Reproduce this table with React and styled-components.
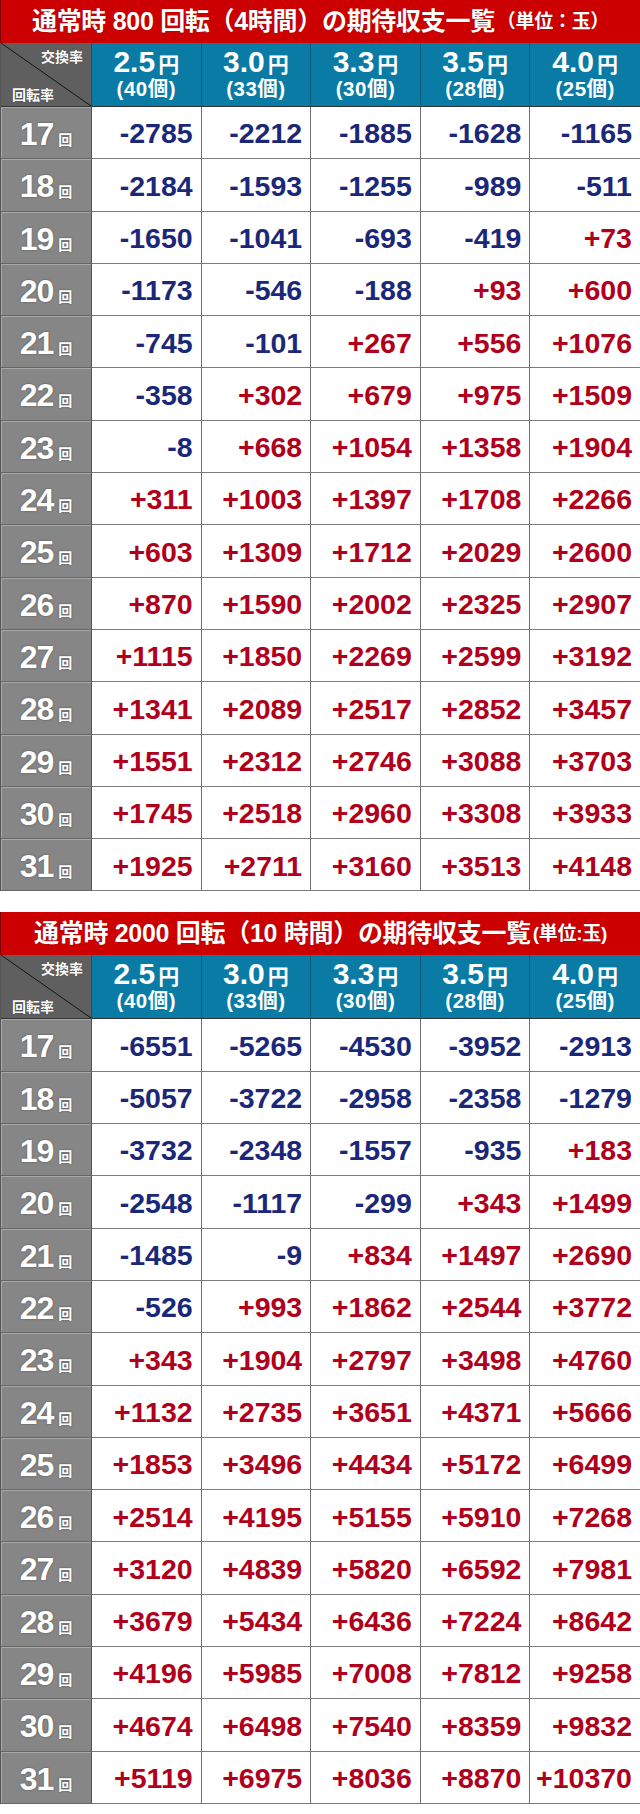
import React from 'react'
import styled, { createGlobalStyle } from 'styled-components'

const rates = [
  { yen: '2.5', count: '40' },
  { yen: '3.0', count: '33' },
  { yen: '3.3', count: '30' },
  { yen: '3.5', count: '28' },
  { yen: '4.0', count: '25' },
]

const spins = [17, 18, 19, 20, 21, 22, 23, 24, 25, 26, 27, 28, 29, 30, 31]

const tables = [
  {
    title: '通常時 800 回転（4時間）の期待収支一覧',
    unit: '（単位：玉）',
    rows: [
      ['-2785', '-2212', '-1885', '-1628', '-1165'],
      ['-2184', '-1593', '-1255', '-989', '-511'],
      ['-1650', '-1041', '-693', '-419', '+73'],
      ['-1173', '-546', '-188', '+93', '+600'],
      ['-745', '-101', '+267', '+556', '+1076'],
      ['-358', '+302', '+679', '+975', '+1509'],
      ['-8', '+668', '+1054', '+1358', '+1904'],
      ['+311', '+1003', '+1397', '+1708', '+2266'],
      ['+603', '+1309', '+1712', '+2029', '+2600'],
      ['+870', '+1590', '+2002', '+2325', '+2907'],
      ['+1115', '+1850', '+2269', '+2599', '+3192'],
      ['+1341', '+2089', '+2517', '+2852', '+3457'],
      ['+1551', '+2312', '+2746', '+3088', '+3703'],
      ['+1745', '+2518', '+2960', '+3308', '+3933'],
      ['+1925', '+2711', '+3160', '+3513', '+4148'],
    ],
  },
  {
    title: '通常時 2000 回転（10 時間）の期待収支一覧',
    unit: '(単位:玉)',
    rows: [
      ['-6551', '-5265', '-4530', '-3952', '-2913'],
      ['-5057', '-3722', '-2958', '-2358', '-1279'],
      ['-3732', '-2348', '-1557', '-935', '+183'],
      ['-2548', '-1117', '-299', '+343', '+1499'],
      ['-1485', '-9', '+834', '+1497', '+2690'],
      ['-526', '+993', '+1862', '+2544', '+3772'],
      ['+343', '+1904', '+2797', '+3498', '+4760'],
      ['+1132', '+2735', '+3651', '+4371', '+5666'],
      ['+1853', '+3496', '+4434', '+5172', '+6499'],
      ['+2514', '+4195', '+5155', '+5910', '+7268'],
      ['+3120', '+4839', '+5820', '+6592', '+7981'],
      ['+3679', '+5434', '+6436', '+7224', '+8642'],
      ['+4196', '+5985', '+7008', '+7812', '+9258'],
      ['+4674', '+6498', '+7540', '+8359', '+9832'],
      ['+5119', '+6975', '+8036', '+8870', '+10370'],
    ],
  },
]

const GlobalStyle = createGlobalStyle`
  body {
    margin: 0;
    background: #fff;
    font-family: "Liberation Sans", "Noto Sans CJK JP", sans-serif;
  }
`

const Page = styled.div`
  width: 640px;
  display: flex;
  flex-direction: column;
  gap: 21px;
  padding-bottom: 10px;
`

const Table = styled.section`
  display: flex;
  flex-direction: column;
`

const Title = styled.h2`
  margin: 0;
  height: 43px;
  background: #cc0000;
  border-left: 1px solid #7a0000;
  box-sizing: border-box;
  display: flex;
  align-items: center;
  justify-content: center;
  color: #fff;
  font-family: "Liberation Sans", "Noto Sans CJK JP", sans-serif;
  font-weight: 700;
  font-size: 25px;
  line-height: 1;
  letter-spacing: -0.3px;
  text-shadow: 0 0 1px rgba(0, 0, 0, 0.35);
`

const Unit = styled.span`
  font-size: 19px;
  margin-left: 2px;
`

const Grid = styled.div`
  display: grid;
  grid-template-columns: 91px repeat(5, 1fr);
  grid-template-rows: 64px repeat(15, 52.3px);
  border-left: 1px solid #555;
`

const Corner = styled.div`
  background:
    linear-gradient(to top right, transparent calc(50% - 0.8px), #111 50%, transparent calc(50% + 0.8px)),
    #5f5f5f;
  border-bottom: 1px solid #333;
  border-right: 1px solid #444;
  color: #fff;
  font-family: "Noto Sans CJK JP", sans-serif;
  font-weight: 700;
  font-size: 14px;
  line-height: 1;
  display: flex;
  flex-direction: column;
  justify-content: space-between;
  padding: 6px 8px 5px 11px;
  box-sizing: border-box;
  text-shadow: 0 0 1px rgba(0, 0, 0, 0.5);
`

const CornerLabel = styled.span`
  align-self: ${(p) => (p.$end ? 'flex-end' : 'flex-start')};
`

const RateHead = styled.div`
  background: #0a7ba4;
  border-right: 1px solid #0b5a78;
  border-bottom: 1px solid #333;
  box-sizing: border-box;
  color: #fff;
  font-weight: 700;
  display: flex;
  flex-direction: column;
  align-items: center;
  justify-content: center;
  gap: 2px;
  padding-bottom: 3px;
  &:last-child {
    border-right: none;
  }
`

const RateLine = styled.div`
  display: flex;
  align-items: baseline;
  line-height: 1;
`

const RateNum = styled.span`
  font-family: "Liberation Sans", sans-serif;
  font-size: 30px;
`

const Yen = styled.span`
  font-family: "Noto Sans CJK JP", sans-serif;
  font-size: 21px;
  margin-left: 3px;
`

const Count = styled.div`
  font-family: "Liberation Sans", "Noto Sans CJK JP", sans-serif;
  font-size: 20.5px;
  line-height: 1;
  letter-spacing: 0.5px;
`

const SpinHead = styled.div`
  background: #868686;
  box-shadow: inset 1px 1px 0 #a8a8a8;
  border-right: 1px solid #555;
  border-bottom: 1px solid #666;
  box-sizing: border-box;
  color: #fff;
  display: flex;
  align-items: baseline;
  justify-content: center;
  padding-top: 11px;
  text-shadow: 0 0 2px rgba(0, 0, 0, 0.45);
`

const SpinNum = styled.span`
  font-family: "Liberation Sans", sans-serif;
  font-weight: 700;
  font-size: 32px;
  line-height: 1;
  letter-spacing: -1px;
`

const SpinUnit = styled.span`
  font-family: "Noto Sans CJK JP", sans-serif;
  font-weight: 700;
  font-size: 14px;
  margin-left: 5px;
`

const Value = styled.div`
  background: #fff;
  border-right: 1px solid #707070;
  border-bottom: 1px solid #7c7c7c;
  box-sizing: border-box;
  display: flex;
  align-items: center;
  justify-content: flex-end;
  padding: 2px 8px 0 0;
  font-family: "Liberation Sans", sans-serif;
  font-weight: 700;
  font-size: 28.5px;
  line-height: 1;
  color: ${(p) => (p.$plus ? '#b0001c' : '#1b2779')};
  &:last-child {
    border-right: none;
  }
`

const Row = styled.div`
  display: contents;
`

const ProfitTable = ({ title, unit, rows }) => (
  <Table>
    <Title>
      {title}
      <Unit>{unit}</Unit>
    </Title>
    <Grid>
      <Row>
        <Corner>
          <CornerLabel $end>交換率</CornerLabel>
          <CornerLabel>回転率</CornerLabel>
        </Corner>
        {rates.map((r) => (
          <RateHead key={r.yen}>
            <RateLine>
              <RateNum>{r.yen}</RateNum>
              <Yen>円</Yen>
            </RateLine>
            <Count>({r.count}個)</Count>
          </RateHead>
        ))}
      </Row>
      {rows.map((vals, i) => (
        <Row key={spins[i]}>
          <SpinHead>
            <SpinNum>{spins[i]}</SpinNum>
            <SpinUnit>回</SpinUnit>
          </SpinHead>
          {vals.map((v, j) => (
            <Value key={j} $plus={v.startsWith('+')}>
              {v}
            </Value>
          ))}
        </Row>
      ))}
    </Grid>
  </Table>
)

export default function App() {
  return (
    <>
      <GlobalStyle />
      <Page>
        {tables.map((t) => (
          <ProfitTable key={t.title} {...t} />
        ))}
      </Page>
    </>
  )
}
